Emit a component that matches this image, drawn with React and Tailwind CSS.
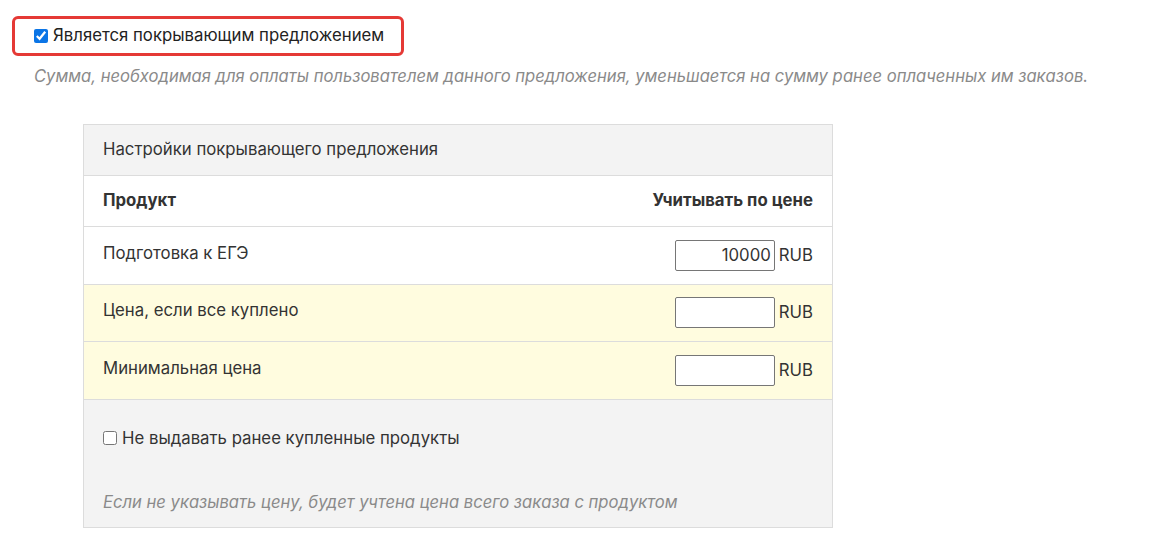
export default function App() {
  return (
    <div className="min-h-screen bg-white pl-[12px] pt-[16px] text-[#333] font-['Inter',sans-serif]">
      <div className="inline-flex h-[40px] w-[392px] items-center rounded-[6px] border-[3px] border-[#e53935] pl-[19px]">
        <label className="flex items-center gap-[5px] text-[16.75px] text-[#222]">
          <input type="checkbox" defaultChecked className="m-0 h-[14px] w-[14px] accent-[#0b75e6]" />
          Является покрывающим предложением
        </label>
      </div>
      <p className="mt-[8px] pl-[22px] text-[16.6px] italic text-[#8a8a8a]">
        Сумма, необходимая для оплаты пользователем данного предложения, уменьшается на сумму ранее оплаченных им заказов.
      </p>

      <div className="ml-[71px] mt-[35px] w-[750px] border border-[#dcdcdc] text-[16.75px]">
        <div className="flex h-[51px] items-center border-b border-[#dcdcdc] bg-[#f3f3f3] px-[19px]">
          Настройки покрывающего предложения
        </div>
        <div className="flex h-[51px] items-center justify-between border-b border-[#dcdcdc] bg-white px-[19px] font-bold">
          <span>Продукт</span>
          <span>Учитывать по цене</span>
        </div>
        {[
          { label: "Подготовка к ЕГЭ", value: "10000", bg: "bg-white", h: "h-[58px]" },
          { label: "Цена, если все куплено", value: "", bg: "bg-[#fffcdf]", h: "h-[57px]" },
          { label: "Минимальная цена", value: "", bg: "bg-[#fffcdf]", h: "h-[58px]" },
        ].map((r) => (
          <div
            key={r.label}
            className={`flex items-center justify-between border-b border-[#dcdcdc] px-[19px] ${r.h} ${r.bg}`}
          >
            <span className="-mt-[4px]">{r.label}</span>
            <div className="flex items-center gap-[4px]">
              <input
                type="text"
                defaultValue={r.value}
                className="h-[31px] w-[100px] rounded-[2px] border border-[#767676] bg-white px-[3px] text-right text-[16.75px] outline-none"
              />
              <span>RUB</span>
            </div>
          </div>
        ))}
        <div className="flex h-[127px] flex-col bg-[#f3f3f3] px-[19px] pt-[26px]">
          <label className="flex items-center gap-[5px]">
            <input type="checkbox" className="m-0 h-[14px] w-[14px]" />
            Не выдавать ранее купленные продукты
          </label>
          <p className="mt-[39px] text-[16.6px] italic text-[#8a8a8a]">
            Если не указывать цену, будет учтена цена всего заказа с продуктом
          </p>
        </div>
      </div>
    </div>
  );
}
